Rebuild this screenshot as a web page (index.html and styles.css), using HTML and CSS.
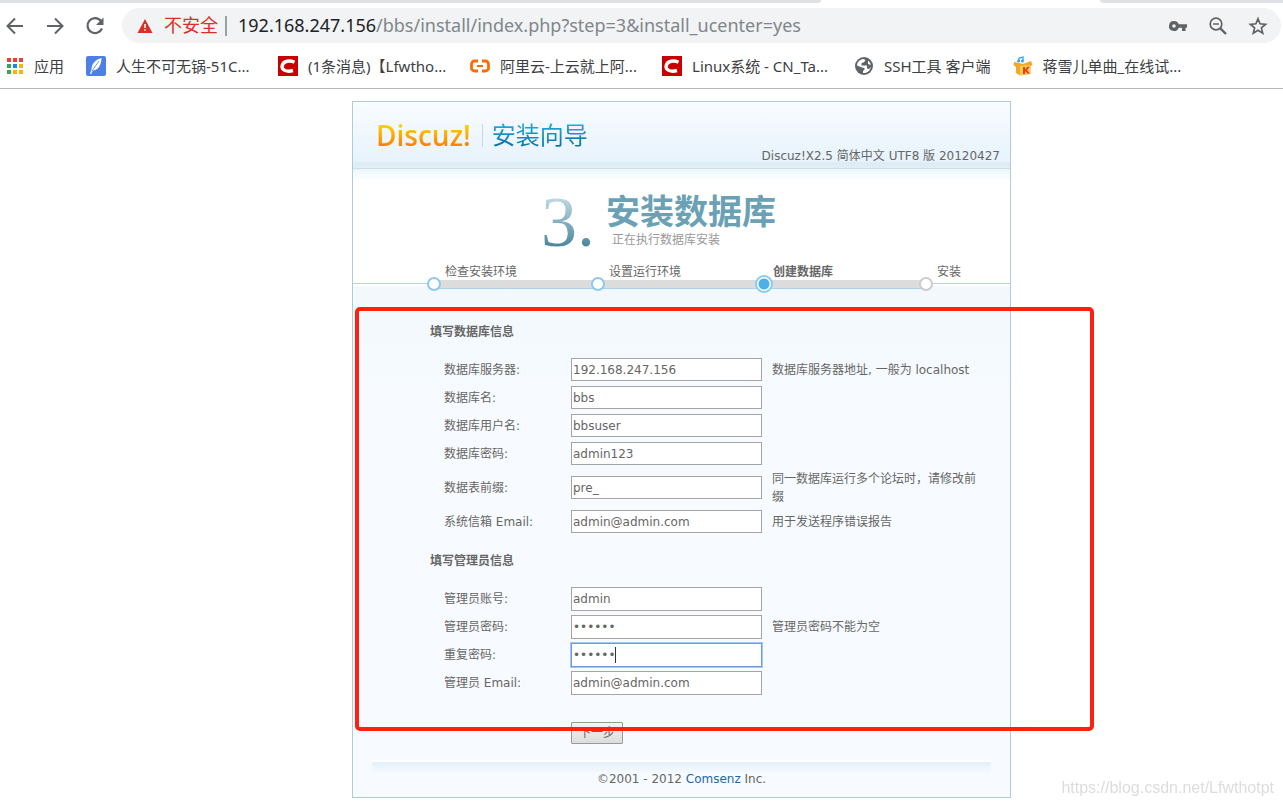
FILE: index.html
```html
<!DOCTYPE html>
<html lang="zh-CN">
<head>
<meta charset="utf-8">
<title>Discuz! 安装向导</title>
<meta name="viewport" content="width=device-width, initial-scale=1">
<link rel="stylesheet" href="styles.css">
</head>
<body>
<header class="browser">
  <div class="tabstrip"><span class="tabs-left"></span><span class="tabs-right"></span></div>
  <div class="toolbar">
    <button class="nav-btn" type="button" aria-label="后退"><svg width="20" height="20" viewBox="0 0 20 20" fill="none" stroke="#5f6368" stroke-width="2"><path d="M18 10H3M10 2.500L2.500 10L10 17.500"/></svg></button>
    <button class="nav-btn" type="button" aria-label="前进"><svg width="20" height="20" viewBox="0 0 20 20" fill="none" stroke="#5f6368" stroke-width="2"><path d="M2 10H17M10 2.500L17.500 10L10 17.500"/></svg></button>
    <button class="nav-btn" type="button" aria-label="重新加载"><svg width="20" height="20" viewBox="0 0 20 20"><path d="M16 5A7.500 7.500 0 1 0 17 12.500" fill="none" stroke="#5f6368" stroke-width="2.200"/><path d="M18.500 1.500V9H11Z" fill="#5f6368"/></svg></button>
    <div class="omnibox">
      <svg class="warn" width="16" height="16" viewBox="0 0 16 16"><path d="M8 1L15.500 15H.5Z" fill="#d93025"/><path d="M7.200 6h1.600v4H7.200zM7.200 11.200h1.600v1.600H7.200z" fill="#fff"/></svg>
      <span class="insecure">不安全</span>
      <span class="divider"></span>
      <span class="url"><span class="host">192.168.247.156</span>/bbs/install/index.php?step=3&amp;install_ucenter=yes</span>
      <button class="omni-btn" type="button" aria-label="密码"><svg width="20" height="20" viewBox="0 0 20 20"><path fill="#5f6368" fill-rule="evenodd" d="M6 5a5 5 0 1 0 4.700 6.700H14V15h3.500v-3.300H19V8.300h-8.300A5 5 0 0 0 6 5zm0 3.200a1.800 1.800 0 1 1 0 3.600 1.800 1.800 0 0 1 0-3.600z"/></svg></button>
      <button class="omni-btn" type="button" aria-label="缩小"><svg width="20" height="20" viewBox="0 0 20 20" fill="none" stroke="#5f6368"><circle cx="8" cy="8" r="5.800" stroke-width="1.700"/><path d="M12.300 12.300L18 18" stroke-width="2.400"/><path d="M5 8h6" stroke-width="1.500"/></svg></button>
      <button class="omni-btn" type="button" aria-label="收藏"><svg width="20" height="20" viewBox="0 0 20 20" fill="none" stroke="#5f6368" stroke-width="1.700"><path d="M10 2.800L12.100 7.800L17.600 8.300L13.400 11.900L14.700 17.200L10 14.300L5.300 17.200L6.600 11.900L2.400 8.300L7.900 7.800Z"/></svg></button>
    </div>
  </div>
  <nav class="bookmarks" aria-label="书签">
    <a class="bookmark" href="#"><svg width="18" height="18" viewBox="0 0 18 18"><path fill="#ea4335" d="M1 1h4v4H1zM7 1h4v4H7zM13 1h4v4h-4z"/><path fill="#34a853" d="M1 7h4v4H1zM1 13h4v4H1z"/><path fill="#1a86f0" d="M7 7h4v4H7z"/><path fill="#fbb20a" d="M13 7h4v4h-4zM7 13h4v4H7zM13 13h4v4h-4z"/></svg><span>应用</span></a>
    <a class="bookmark" href="#"><svg width="20" height="20" viewBox="0 0 20 20"><rect width="20" height="20" rx="2" fill="#4c80e6"/><path fill="#fff" d="M15.500 2C9 4 5.500 8 5.500 13.500L4 18h1.200l1.500-3.500C12 14.500 15.500 9 15.500 2z"/><path d="M6 15L13 5" stroke="#4c80e6" stroke-width=".8"/></svg><span class="clip">人生不可无锅-51C...</span></a>
    <a class="bookmark" href="#"><svg width="20" height="20" viewBox="0 0 20 20"><rect width="20" height="20" fill="#c90000"/><path d="M16.500 6.200C12 4.200 5.500 4.500 4.200 9.500C3 14.500 9 16.200 15 14.500" fill="none" stroke="#fff" stroke-width="3.400"/></svg><span class="clip">(1条消息)【Lfwtho...</span></a>
    <a class="bookmark" href="#"><svg width="20" height="20" viewBox="0 0 20 20" fill="none" stroke="#ff6a00" stroke-width="2.800"><path d="M8 5H4.500A3 3 0 0 0 1.500 8v4a3 3 0 0 0 3 3H8M12 5h3.500a3 3 0 0 1 3 3v4a3 3 0 0 1-3 3H12"/><path d="M7 10h6" stroke-width="2"/></svg><span class="clip">阿里云-上云就上阿...</span></a>
    <a class="bookmark" href="#"><svg width="20" height="20" viewBox="0 0 20 20"><rect width="20" height="20" fill="#c90000"/><path d="M16.500 6.200C12 4.200 5.500 4.500 4.200 9.500C3 14.500 9 16.200 15 14.500" fill="none" stroke="#fff" stroke-width="3.400"/></svg><span class="clip">Linux系统 - CN_Ta...</span></a>
    <a class="bookmark" href="#"><svg width="20" height="20" viewBox="0 0 20 20"><circle cx="10" cy="10" r="9" fill="#5f6368"/><path fill="#fff" d="M3 9.500C3 6 6 3 10 3l1.500 1.500L9.500 6.500 7.500 7v2.500h5.500v3l2 .5c1-1 2-2 2-4l-3-1V5.500l.5-.7a7 7 0 0 1 1 9.400C13 17.500 10 17 9 17v-2l1.500-1.500V12L8 11.500z"/></svg><span>SSH工具 客户端</span></a>
    <a class="bookmark" href="#"><svg width="20" height="20" viewBox="0 0 20 20"><path fill="#f5a623" d="M1 6l5 1 4 1 8-3 1.500 4-2 1v8L7 19.500 3 17V11L.5 9z"/><path fill="#ffd05a" d="M7 10l10-1v8.500l-10 1.500z"/><path fill="#e8401c" d="M10 11h2v2.500l2.300-2.700H17L14 14l3 3.500h-2.500L12 15v3h-2z"/><path d="M6 5V2l4-1v4" fill="none" stroke="#3aa3e8" stroke-width="1.300"/><circle cx="5.500" cy="5" r="1.500" fill="#3aa3e8"/><circle cx="9.500" cy="5" r="1.500" fill="#3aa3e8"/></svg><span class="clip">蒋雪儿单曲_在线试...</span></a>
  </nav>
</header>

<main class="page">
  <div class="installer">
    <header class="banner">
      <div class="brand"><span class="logo">Discuz!</span><h1 class="product">安装向导</h1></div>
      <p class="version">Discuz!X2.5 简体中文 UTF8 版 20120427</p>
    </header>

    <section class="stage">
      <div class="stage-title">
        <span class="stage-no">3.</span>
        <div>
          <h2>安装数据库</h2>
          <p>正在执行数据库安装</p>
        </div>
      </div>
      <ol class="steps">
        <li class="done"><span>检查安装环境</span></li>
        <li class="done"><span>设置运行环境</span></li>
        <li class="current"><span>创建数据库</span></li>
        <li><span>安装</span></li>
      </ol>
    </section>

    <form class="setup">
      <h3>填写数据库信息</h3>
      <div class="row"><label for="dbhost">数据库服务器:</label><input id="dbhost" type="text" value="192.168.247.156"><p>数据库服务器地址, 一般为 localhost</p></div>
      <div class="row"><label for="dbname">数据库名:</label><input id="dbname" type="text" value="bbs"></div>
      <div class="row"><label for="dbuser">数据库用户名:</label><input id="dbuser" type="text" value="bbsuser"></div>
      <div class="row"><label for="dbpw">数据库密码:</label><input id="dbpw" type="text" value="admin123"></div>
      <div class="row"><label for="prefix">数据表前缀:</label><input id="prefix" type="text" value="pre_"><p>同一数据库运行多个论坛时，请修改前缀</p></div>
      <div class="row"><label for="sysmail">系统信箱 Email:</label><input id="sysmail" type="text" value="admin@admin.com"><p>用于发送程序错误报告</p></div>

      <h3>填写管理员信息</h3>
      <div class="row tall"><label for="user">管理员账号:</label><input id="user" type="text" value="admin"></div>
      <div class="row tall"><label for="pw">管理员密码:</label><input id="pw" type="password" value="admin1"><p>管理员密码不能为空</p></div>
      <div class="row tall"><label for="pw2">重复密码:</label><span class="field"><input id="pw2" class="active" type="password" value="admin1"><i class="caret"></i></span></div>
      <div class="row tall"><label for="mail">管理员 Email:</label><input id="mail" type="text" value="admin@admin.com"></div>

      <button class="next" type="button">下一步</button>
      <div class="highlight"></div>
    </form>

    <footer class="legal">©2001 - 2012 <a href="#">Comsenz</a> Inc.</footer>
  </div>
</main>
<div class="watermark">https://blog.csdn.net/Lfwthotpt</div>
</body>
</html>
```
FILE: styles.css
```css
*, *::before, *::after { box-sizing: border-box; }

body {
  margin: 0;
  background: #fff;
  color: #666;
  font: 12px/18px "DejaVu Sans", "Noto Sans CJK SC", sans-serif;
}

h1, h2, h3, p, ol { margin: 0; padding: 0; }
button { font: inherit; }

/* Browser chrome */
.browser {
  border-bottom: 1px solid #b5b5b5;
  font-family: "Noto Sans", "Noto Sans CJK SC", sans-serif;
}
.tabstrip { display: flex; justify-content: space-between; height: 3px; }
.tabs-left { width: 64%; background: #dee1e6; border-bottom-right-radius: 8px; }
.tabs-right { width: 183px; background: #dee1e6; border-bottom-left-radius: 8px; }
.toolbar { display: flex; align-items: center; gap: 20px; padding: 5px 2px 0 5px; }
.nav-btn, .omni-btn { display: flex; padding: 0; border: 0; background: none; }
.omnibox {
  flex: 1;
  display: flex;
  align-items: center;
  height: 35px;
  margin-left: -3px;
  padding: 0 13px 0 15px;
  border-radius: 18px;
  background: #f1f3f4;
  font-size: 18px;
  line-height: 35px;
  white-space: nowrap;
}
.insecure { margin-left: 11px; color: #d93025; }
.divider { width: 2px; height: 20px; margin: 0 11px 0 7px; background: #9aa0a6; }
.url { flex: 1; color: #80868b; overflow: hidden; }
.host { color: #202124; }
.omni-btn { margin-left: 20px; }
.bookmarks {
  display: flex;
  align-items: center;
  gap: 22px;
  height: 45px;
  padding-left: 6px;
  overflow: hidden;
  font-size: 15px;
  line-height: 24px;
}
.bookmark { display: flex; align-items: center; gap: 10px; color: #3c4043; text-decoration: none; white-space: nowrap; }
.bookmark svg { flex: none; }
.clip { width: 140px; }

/* Installer panel */
.page { display: flex; justify-content: center; padding: 12px 0 8px 80px; }
.installer { width: 659px; border: 1px solid #b0cbd5; background: #f7fbff; }
.banner {
  display: flex;
  justify-content: space-between;
  height: 67px;
  padding: 0 10px 0 23px;
  border-bottom: 1px solid #cfdfe6;
  background: linear-gradient(#f9fcff, #e7f3fc 90%, #dcebf7 92%, #e2eef5);
}
.brand { display: flex; align-items: center; }
.logo {
  padding-right: 11px;
  background: linear-gradient(#ffcf00 25%, #ff8400 75%);
  background-clip: text;
  -webkit-background-clip: text;
  color: transparent;
  font: 600 28px/38px "Open Sans", sans-serif;
}
.product {
  position: relative;
  padding: 0 0 2px 10px;
  background: linear-gradient(#20a5d6 25%, #0b72a5 80%);
  background-clip: text;
  -webkit-background-clip: text;
  color: transparent;
  font: 400 24px/36px "Noto Sans CJK SC", sans-serif;
}
.product::before { content: ""; position: absolute; left: 0; top: 8px; height: 23px; border-left: 1px solid #c8d8e2; }
.version { align-self: flex-end; padding-bottom: 3px; }

.stage { background: linear-gradient(#ebf6fa, #fff 12px); padding-top: 12px; }
.stage-title { display: flex; height: 82px; padding-left: 188px; }
.stage-no {
  width: 65px;
  background: linear-gradient(#c1dbe5 20%, #49829a 82%);
  background-clip: text;
  -webkit-background-clip: text;
  color: transparent;
  font: 72px/82px "Liberation Serif", serif;
}
.stage-title h2 { padding-top: 8px; color: #6ba1b5; font: bold 34px/42px "Noto Sans CJK SC", sans-serif; }
.stage-title p { padding-left: 6px; color: #999; }
.steps {
  position: relative;
  z-index: 1;
  display: flex;
  padding-left: 81px;
  background: linear-gradient(transparent 20px, #b5d3e0 20px, #b5d3e0 21px, #fff 21px, #fff 23px, #f2f8fc 23px);
  list-style: none;
}
.steps li { position: relative; width: 164px; height: 26px; }
.steps li:last-child { width: 84px; }
.steps span { display: block; padding-left: 11px; line-height: 18px; }
.steps li:not(:last-child)::after { content: ""; display: block; height: 9px; margin-top: -1px; background: #dcdcdc; border-bottom: 1px solid #a9d2ec; }
.steps li::before {
  content: "";
  position: absolute;
  left: -7px;
  top: 14px;
  width: 14px;
  height: 14px;
  border: 2px solid #ccc;
  border-radius: 50%;
  background: #fff;
}
.steps .done::before { border-color: #8bcaf0; }
.steps .current::before {
  left: -7px;
  top: 12px;
  width: 18px;
  height: 18px;
  border-color: #8bcaf0;
  background: radial-gradient(circle, #4fb0e8 5px, #fff 6px);
}
.current { font-weight: bold; }

.setup {
  position: relative;
  padding: 34px 33px 0 77px;
  background: linear-gradient(#f2f8fc, #f7fbff 120px);
}
.setup h3 { margin-bottom: 15px; font-size: 12px; line-height: 18px; }
.row + h3 { margin-top: 16px; }
.row {
  display: grid;
  grid-template-columns: 127px 191px 1fr;
  align-items: center;
  min-height: 28px;
  padding: 2px 0 2px 14px;
}
.row p { padding-left: 10px; }
.row input {
  width: 191px;
  height: 23px;
  margin: 0 0 1px;
  padding: 0 1px;
  border: 1px solid #a5a5a5;
  background: #fff;
  color: #666;
  font: inherit;
}
.tall input { height: 24px; margin: 0; }
.row .active { display: block; border-color: #6f9ade; box-shadow: 0 0 0 1px #a5c7f7; outline: 0; }
.field { position: relative; }
.caret { position: absolute; left: 44px; top: 4px; height: 16px; border-left: 1px solid #333; }
.next {
  display: block;
  height: 22px;
  margin: 25px 0 0 141px;
  padding: 0 7px;
  border: 1px solid #999;
  border-radius: 1px;
  background: linear-gradient(#f4f4f4, #dcdcdc);
  color: #666;
  line-height: 20px;
}
.highlight {
  position: absolute;
  left: 2px;
  right: -84px;
  top: 18px;
  bottom: 13px;
  border: 4px solid #ff2010;
  border-radius: 5px;
  pointer-events: none;
}
.legal {
  margin: 16px 19px 0;
  padding: 8px 0 9px;
  border-top: 2px solid #fff;
  background: linear-gradient(#e2f0fb, #f7fbff 12px);
  text-align: center;
}
.legal a { color: #2366a8; text-decoration: none; }

.watermark {
  position: fixed;
  right: 9px;
  bottom: 9px;
  color: #ddd;
  font: 16px/18px "Liberation Sans", sans-serif;
}
```
